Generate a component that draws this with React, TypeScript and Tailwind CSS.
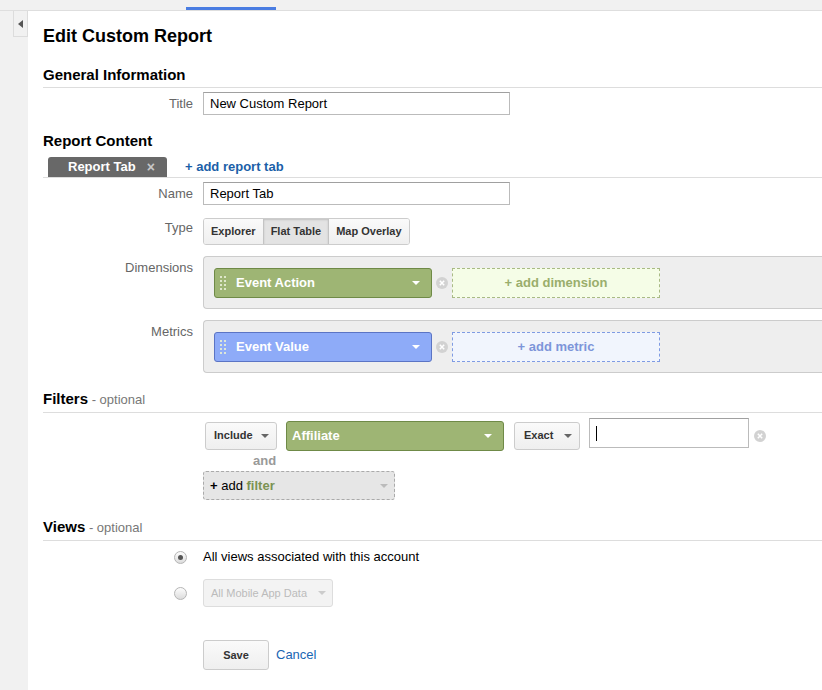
import React from "react";

const Dots = () => (
  <svg width="6" height="14" viewBox="0 0 6 14" className="shrink-0">
    {[1, 5, 9, 13].map((y) => (
      <g key={y} fill="#e4ecd4" fillOpacity="0.9">
        <rect x="0" y={y - 1} width="2" height="2" />
        <rect x="4" y={y - 1} width="2" height="2" />
      </g>
    ))}
  </svg>
);

const Caret = ({ color = "#fff", size = 8 }: { color?: string; size?: number }) => (
  <svg width={size} height={size / 2} viewBox="0 0 8 4" className="shrink-0">
    <path d="M0 0 L8 0 L4 4 Z" fill={color} />
  </svg>
);

const RemoveIcon = () => (
  <svg width="12" height="12" viewBox="0 0 12 12" className="shrink-0">
    <circle cx="6" cy="6" r="6" fill="#d2d2d2" />
    <path d="M3.8 3.8 L8.2 8.2 M8.2 3.8 L3.8 8.2" stroke="#fff" strokeWidth="1.5" />
  </svg>
);

const Radio = ({ checked }: { checked?: boolean }) => (
  <span className="flex h-[13px] w-[13px] items-center justify-center rounded-full border border-[#b5b5b5] bg-gradient-to-b from-[#fdfdfd] to-[#dcdcdc]">
    {checked && <span className="h-[5px] w-[5px] rounded-full bg-[#555]" />}
  </span>
);

const Row = ({ label, children, className = "", labelClass = "" }: { label?: string; children: React.ReactNode; className?: string; labelClass?: string }) => (
  <div className={`flex ${className}`}>
    <div className={`w-[150px] shrink-0 text-right text-[13px] leading-[19px] text-[#666] ${labelClass}`}>{label}</div>
    <div className="ml-[10px] flex-1">{children}</div>
  </div>
);

const Heading = ({ title, optional, className = "" }: { title: string; optional?: boolean; className?: string }) => (
  <div className={`border-b border-[#ddd] pb-[3px] leading-[18px] ${className}`}>
    <span className="text-[15px] font-bold text-black">{title}</span>
    {optional && <span className="text-[13px] text-[#777]"> - optional</span>}
  </div>
);

const Pill = ({ label, tone }: { label: string; tone: "green" | "blue" }) => (
  <div
    className={`flex h-[30px] w-[218px] items-center rounded-[3px] border pl-[5px] pr-[11px] text-[13px] font-bold text-white ${
      tone === "green" ? "border-[#6f8a47] bg-[#9eb574]" : "border-[#5b74c4] bg-[#8eabf8]"
    }`}
  >
    <Dots />
    <span className="ml-[10px] flex-1">{label}</span>
    <Caret />
  </div>
);

const AddBox = ({ label, tone }: { label: string; tone: "green" | "blue" }) => (
  <div
    className={`flex h-[30px] w-[208px] items-center justify-center border border-dashed text-[13px] font-bold ${
      tone === "green" ? "border-[#a9ba85] bg-[#f5fde7] text-[#9aae6c]" : "border-[#7f9be3] bg-[#f1f5fd] text-[#7d95d9]"
    }`}
  >
    {label}
  </div>
);

const GrayButton = ({ children, className = "" }: { children: React.ReactNode; className?: string }) => (
  <div
    className={`flex items-center rounded-[3px] border border-[#ccc] bg-gradient-to-b from-[#fafafa] to-[#efefef] text-[11px] font-bold text-[#333] ${className}`}
  >
    {children}
  </div>
);

const TextInput = ({ value }: { value: string }) => (
  <input
    readOnly
    value={value}
    className="block h-[23px] w-[307px] border border-[#bbb] border-t-[#a0a0a0] px-[6px] text-[13px] text-black outline-none"
  />
);

export default function App() {
  return (
    <div className="flex h-[690px] w-[822px] flex-col overflow-hidden bg-white font-['Liberation_Sans',Arial,sans-serif]">
      {/* top strip with the active tab marker */}
      <div className="relative h-[11px] shrink-0 border-b border-[#dedede] bg-[#f1f1f1]">
        <div className="absolute left-[186px] top-[7px] h-[3px] w-[90px] bg-[#4a7de2]" />
      </div>

      <div className="flex flex-1">
        <div className="w-[28px] shrink-0 bg-[#f1f1f1] pl-[13px]">
          <div className="flex h-[26px] w-[15px] items-center justify-center border border-t-0 border-[#dcdcdc] bg-[#f1f1f1]">
            <svg width="5" height="8" viewBox="0 0 5 8">
              <path d="M5 0 L0 4 L5 8 Z" fill="#555" />
            </svg>
          </div>
        </div>

        <div className="flex-1 pl-[15px]">
          <h1 className="mt-[14px] text-[18px] font-bold leading-[22px] text-black">Edit Custom Report</h1>

          <Heading title="General Information" className="mt-[19px]" />
          <Row label="Title" className="mt-[4px] items-center">
            <TextInput value="New Custom Report" />
          </Row>

          <div className="mt-[17px] text-[15px] font-bold leading-[18px] text-black">Report Content</div>
          <div className="mt-[7px] flex items-end border-b border-[#ddd]">
            <div className="ml-[5px] flex h-[20px] w-[119px] items-center rounded-t-[3px] bg-[#686868] pl-[20px] text-[13px] font-bold leading-[16px] text-white">
              <span>Report Tab</span>
              <span className="ml-[11px] text-[14px] font-bold text-[#c8c8c8]">×</span>
            </div>
            <span className="mb-[2px] ml-[18px] text-[13px] font-bold leading-[16px] text-[#1b5fa8]">+ add report tab</span>
          </div>

          <Row label="Name" className="mt-[4px] items-center">
            <TextInput value="Report Tab" />
          </Row>

          <Row label="Type" className="mt-[13px]">
            <div className="flex h-[27px] w-fit overflow-hidden rounded-[3px] border border-[#ccc] text-[11px] font-bold text-[#333]">
              <div className="flex items-center bg-gradient-to-b from-[#fafafa] to-[#efefef] px-[7px]">Explorer</div>
              <div className="flex items-center border-x border-[#c4c4c4] bg-[#e3e3e3] px-[7px] shadow-[inset_0_1px_2px_rgba(0,0,0,0.15)]">
                Flat Table
              </div>
              <div className="flex items-center bg-gradient-to-b from-[#fafafa] to-[#efefef] px-[7px]">Map Overlay</div>
            </div>
          </Row>

          <Row label="Dimensions" className="mt-[11px]" labelClass="pt-[2px]">
            <div className="flex h-[53px] items-center gap-[4px] rounded-l-[4px] border border-r-0 border-[#ccc] bg-[#eee] pl-[10px]">
              <Pill label="Event Action" tone="green" />
              <RemoveIcon />
              <AddBox label="+ add dimension" tone="green" />
            </div>
          </Row>

          <Row label="Metrics" className="mt-[11px]" labelClass="pt-[2px]">
            <div className="flex h-[53px] items-center gap-[4px] rounded-l-[4px] border border-r-0 border-[#ccc] bg-[#eee] pl-[10px]">
              <Pill label="Event Value" tone="blue" />
              <RemoveIcon />
              <AddBox label="+ add metric" tone="blue" />
            </div>
          </Row>

          <Heading title="Filters" optional className="mt-[17px]" />
          <Row className="mt-[5px]">
            <div className="ml-[2px] flex items-center">
              <GrayButton className="h-[28px] w-[72px] justify-between pl-[8px] pr-[7px]">
                <span>Include</span>
                <Caret color="#666" />
              </GrayButton>
              <div className="ml-[9px] flex h-[30px] w-[218px] items-center rounded-[3px] border border-[#6f8a47] bg-[#9eb574] pl-[5px] pr-[11px] text-[13px] font-bold text-white">
                <span className="flex-1">Affiliate</span>
                <Caret />
              </div>
              <GrayButton className="ml-[10px] h-[28px] w-[66px] justify-between pl-[9px] pr-[7px]">
                <span>Exact</span>
                <Caret color="#666" />
              </GrayButton>
              <div className="mb-[5px] ml-[9px] flex h-[30px] w-[160px] items-center border border-[#bbb] border-t-[#a0a0a0] pl-[6px]">
                <span className="h-[15px] w-[1px] bg-black" />
              </div>
              <span className="ml-[5px]">
                <RemoveIcon />
              </span>
            </div>
            <div className="pl-[50px] text-[13px] font-bold leading-[16px] text-[#999]">and</div>
            <div className="mt-[2px] flex h-[29px] w-[192px] items-center justify-between rounded-[3px] border border-dashed border-[#aaa] bg-[#e6e6e6] pl-[6px] pr-[6px] text-[13px]">
              <span>
                <span className="font-bold text-black">+</span> add <span className="font-bold text-[#7b9253]">filter</span>
              </span>
              <Caret color="#bbb" />
            </div>
          </Row>

          <Heading title="Views" optional className="mt-[18px]" />
          <Row className="mt-[7px]">
            <div className="-ml-[29px] flex h-[18px] items-center">
              <Radio checked />
              <span className="ml-[16px] text-[13px] leading-[18px] text-black">All views associated with this account</span>
            </div>
            <div className="-ml-[29px] mt-[13px] flex items-center">
              <Radio />
              <div className="ml-[16px] flex h-[28px] w-[130px] items-center justify-between rounded-[3px] border border-[#ddd] bg-[#f3f3f3] pl-[7px] pr-[6px] text-[11px] text-[#bbb]">
                <span>All Mobile App Data</span>
                <Caret color="#ccc" />
              </div>
            </div>
            <div className="mt-[33px] flex items-center">
              <GrayButton className="h-[30px] w-[66px] justify-center">Save</GrayButton>
              <span className="ml-[7px] text-[13px] text-[#1a66b3]">Cancel</span>
            </div>
          </Row>
        </div>
      </div>
    </div>
  );
}
